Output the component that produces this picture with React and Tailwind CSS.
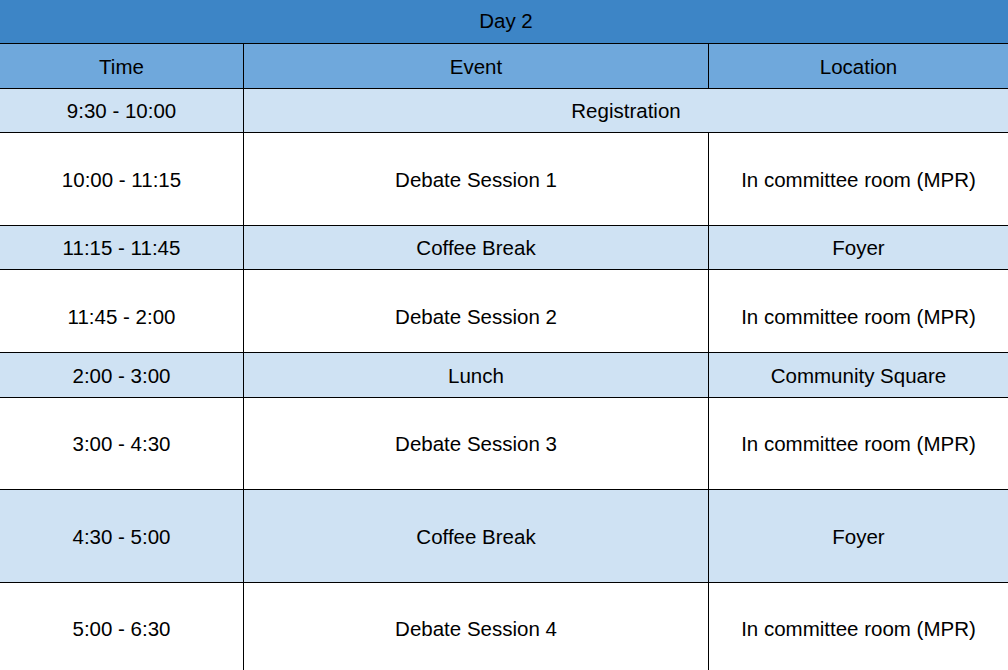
export default function App() {
  const rows = [
    { t: "9:30 - 10:00", e: "Registration", span: true, h: "h-[44px]", bg: "bg-[#cfe2f3]", pad: "pt-[2px]" },
    { t: "10:00 - 11:15", e: "Debate Session 1", l: "In committee room (MPR)", h: "h-[93px]", bg: "bg-white", pad: "pt-[3px]" },
    { t: "11:15 - 11:45", e: "Coffee Break", l: "Foyer", h: "h-[44px]", bg: "bg-[#cfe2f3]", pad: "pt-[2px]" },
    { t: "11:45 - 2:00", e: "Debate Session 2", l: "In committee room (MPR)", h: "h-[83px]", bg: "bg-white", pad: "pt-[13px]" },
    { t: "2:00 - 3:00", e: "Lunch", l: "Community Square", h: "h-[45px]", bg: "bg-[#cfe2f3]", pad: "pt-[2px]" },
    { t: "3:00 - 4:30", e: "Debate Session 3", l: "In committee room (MPR)", h: "h-[92px]", bg: "bg-white", pad: "pt-[2px]" },
    { t: "4:30 - 5:00", e: "Coffee Break", l: "Foyer", h: "h-[93px]", bg: "bg-[#cfe2f3]", pad: "pt-[2px]" },
    { t: "5:00 - 6:30", e: "Debate Session 4", l: "In committee room (MPR)", h: "h-[88px]", bg: "bg-white", last: true, pad: "pt-[4px]" },
  ];
  return (
    <div className="w-[1008px] h-[670px] overflow-hidden bg-white text-black text-[20.5px] font-['Liberation_Sans',Arial,sans-serif]">
      <div className="h-[44px] bg-[#3d85c6] border-b border-black flex items-center justify-center pl-[4px]">Day 2</div>
      <div className="h-[45px] bg-[#6fa8dc] border-b border-black flex">
        <div className="w-[244px] border-r border-black flex items-center justify-center pt-[2px]">Time</div>
        <div className="w-[465px] border-r border-black flex items-center justify-center pt-[2px]">Event</div>
        <div className="flex-1 flex items-center justify-center pt-[2px]">Location</div>
      </div>
      {rows.map((r, i) => (
        <div key={i} className={`${r.h} ${r.bg} ${r.last ? "" : "border-b border-black"} flex`}>
          <div className={`w-[244px] border-r border-black flex items-center justify-center ${r.pad}`}>{r.t}</div>
          {r.span ? (
            <div className={`flex-1 flex items-center justify-center ${r.pad}`}>{r.e}</div>
          ) : (
            <>
              <div className={`w-[465px] border-r border-black flex items-center justify-center ${r.pad}`}>{r.e}</div>
              <div className={`flex-1 flex items-center justify-center ${r.pad}`}>{r.l}</div>
            </>
          )}
        </div>
      ))}
    </div>
  );
}
